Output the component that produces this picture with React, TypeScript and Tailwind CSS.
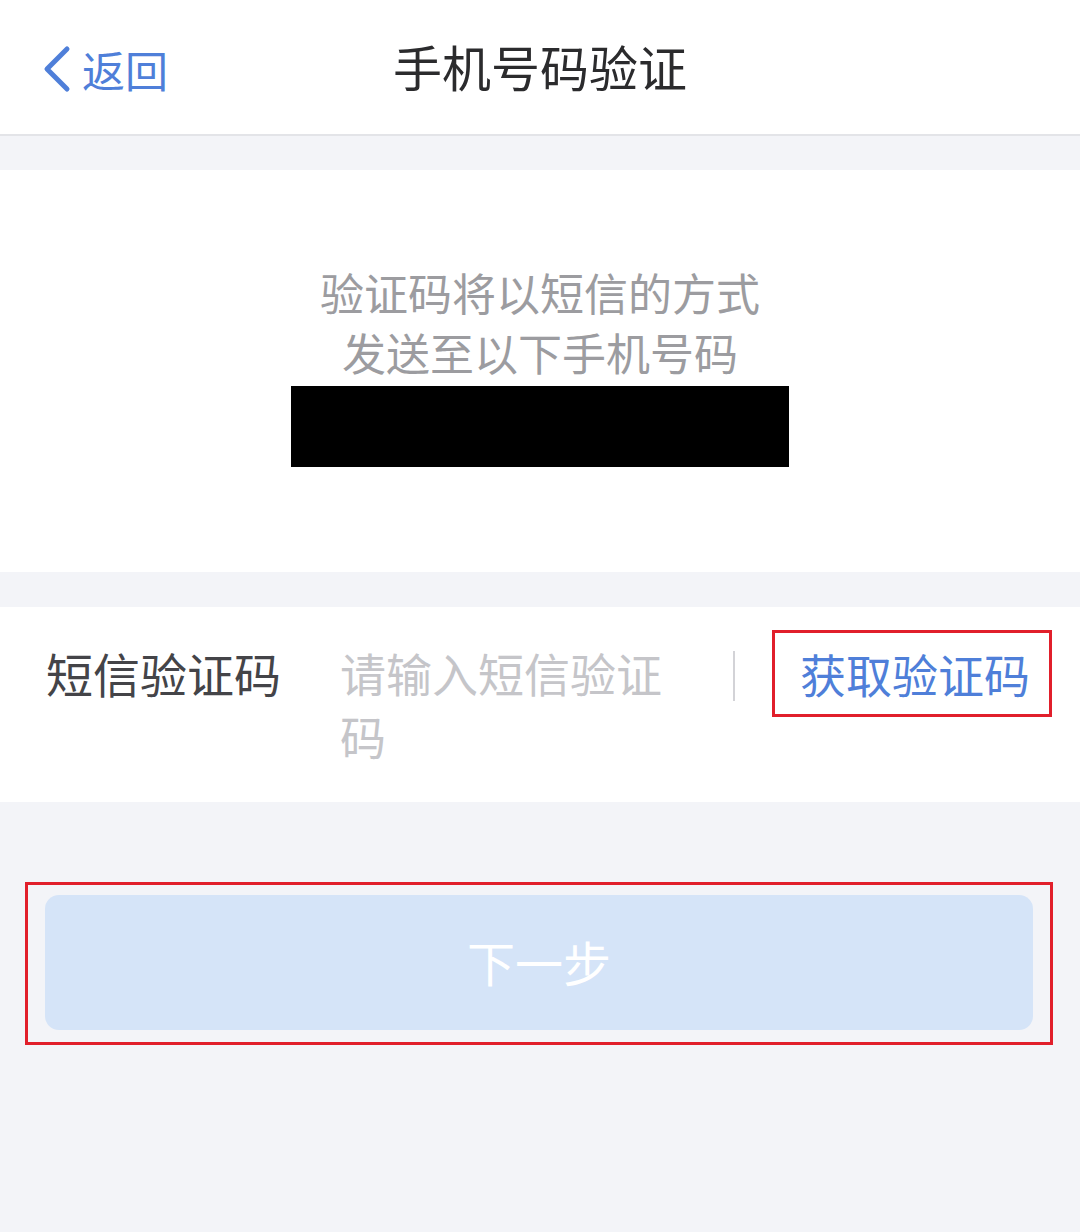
import React from "react";

const font = { fontFamily: '"Noto Sans CJK SC", "Noto Sans", sans-serif' };

export default function App() {
  return (
    <div className="w-[1080px] min-h-[1232px] bg-[#f3f4f8]" style={font}>
      {/* Header */}
      <div className="relative h-[136px] bg-white border-b-2 border-[#e3e4e8] flex items-center justify-center">
        <div className="absolute left-[40px] top-[45px] flex items-center gap-[10px] text-[#4f7fd9]">
          <svg width="32" height="48" viewBox="0 0 32 48" fill="none">
            <path d="M27 4 L7 24 L27 44" stroke="#4f7fd9" strokeWidth="5" strokeLinecap="round" strokeLinejoin="round" />
          </svg>
          <span className="text-[43px] leading-[46px]">返回</span>
        </div>
        <span className="text-[49px] leading-[60px] text-[#2b2b2d] -mt-[2px]">手机号码验证</span>
      </div>

      <div className="h-[34px]" />

      {/* Info section */}
      <div className="bg-white h-[402px] flex flex-col items-center pt-[92px]">
        <div className="text-[44px] leading-[60px] text-[#9c9ca0] text-center">
          <div>验证码将以短信的方式</div>
          <div>发送至以下手机号码</div>
        </div>
        <div className="mt-[4px] w-[498px] h-[81px] bg-black" />
      </div>

      <div className="h-[35px]" />

      {/* SMS code row */}
      <div className="bg-white h-[195px] flex items-start pt-[34px]">
        <div className="w-[340px] pl-[46px] text-[47px] leading-[63px] text-[#444448]">短信验证码</div>
        <div className="w-[352px] text-[46px] leading-[63px] text-[#c5c5c9]">请输入短信验证码</div>
        <div className="ml-[41px] mt-[10px] w-[2px] h-[50px] bg-[#d3d3d7]" />
        <div className="ml-[37px] -mt-[11px] w-[280px] h-[87px] border-[3px] border-[#e11f2b] flex items-center pl-[25px]">
          <span className="text-[46px] leading-[63px] text-[#4f7fd9]">获取验证码</span>
        </div>
      </div>

      {/* Next button */}
      <div className="pt-[80px] pl-[25px]">
        <div className="w-[1028px] h-[163px] border-[3px] border-[#e11f2b] pt-[10px] pl-[17px]">
          <div className="w-[988px] h-[135px] rounded-[14px] bg-[#d5e4f8] flex items-center justify-center">
            <span className="text-[48px] leading-[60px] text-white -mt-[4px]">下一步</span>
          </div>
        </div>
      </div>
    </div>
  );
}
